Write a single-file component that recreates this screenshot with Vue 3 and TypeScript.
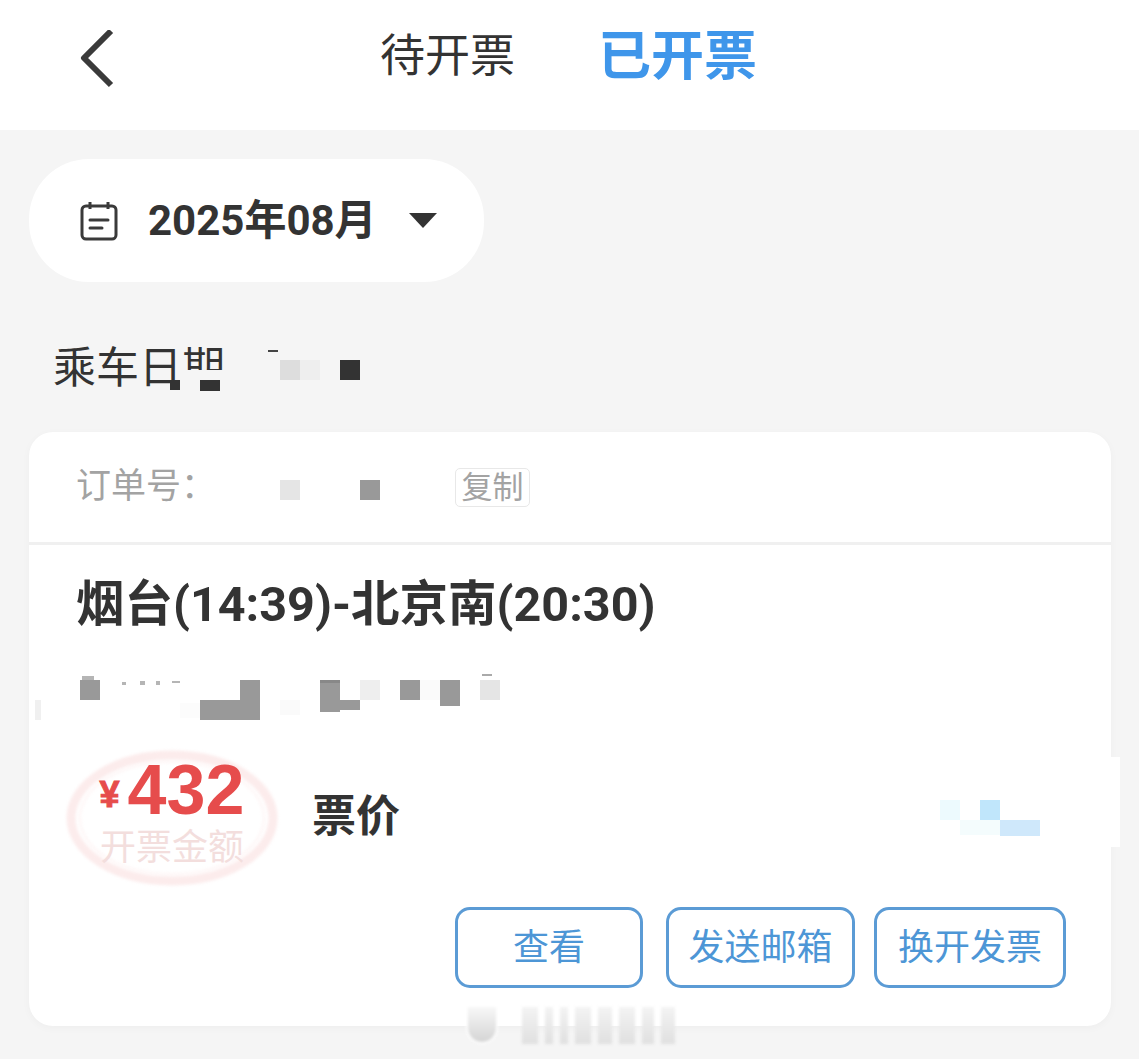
<script setup lang="ts">
interface Block { x: number; y: number; w: number; h: number; c: string }

// pixelated blocks that sit over the private parts of the order
const blocks: Block[] = [
  { x: 178, y: 370, w: 46, h: 22, c: '#f5f5f5' },
  { x: 170, y: 380, w: 10, h: 10, c: '#333333' },
  { x: 200, y: 380, w: 20, h: 11, c: '#333333' },
  { x: 268, y: 350, w: 10, h: 2, c: '#444444' },
  { x: 280, y: 360, w: 20, h: 20, c: '#dddddd' },
  { x: 300, y: 360, w: 20, h: 20, c: '#eeeeee' },
  { x: 340, y: 360, w: 20, h: 20, c: '#333333' },
  { x: 280, y: 480, w: 20, h: 20, c: '#e5e5e5' },
  { x: 360, y: 480, w: 20, h: 20, c: '#999999' },
  { x: 80, y: 680, w: 20, h: 20, c: '#999999' },
  { x: 82, y: 676, w: 12, h: 4, c: '#b5b5b5' },
  { x: 122, y: 682, w: 4, h: 3, c: '#b5b5b5' },
  { x: 140, y: 681, w: 5, h: 4, c: '#b5b5b5' },
  { x: 156, y: 681, w: 4, h: 4, c: '#b5b5b5' },
  { x: 172, y: 681, w: 8, h: 2, c: '#b5b5b5' },
  { x: 180, y: 703, w: 20, h: 15, c: '#fcfcfc' },
  { x: 240, y: 680, w: 20, h: 20, c: '#999999' },
  { x: 200, y: 700, w: 60, h: 20, c: '#999999' },
  { x: 280, y: 700, w: 20, h: 15, c: '#fafafa' },
  { x: 320, y: 680, w: 20, h: 32, c: '#999999' },
  { x: 320, y: 680, w: 20, h: 3, c: '#888888' },
  { x: 340, y: 700, w: 20, h: 10, c: '#999999' },
  { x: 360, y: 680, w: 20, h: 20, c: '#eeeeee' },
  { x: 400, y: 680, w: 20, h: 20, c: '#999999' },
  { x: 420, y: 680, w: 20, h: 20, c: '#fafafa' },
  { x: 440, y: 680, w: 20, h: 26, c: '#999999' },
  { x: 480, y: 680, w: 20, h: 20, c: '#e5e5e5' },
  { x: 482, y: 674, w: 10, h: 2, c: '#aaaaaa' },
  { x: 35, y: 700, w: 6, h: 20, c: '#f0f0f0' },
  { x: 940, y: 800, w: 20, h: 20, c: '#edfafe' },
  { x: 980, y: 800, w: 20, h: 20, c: '#c0e6fb' },
  { x: 960, y: 820, w: 40, h: 15, c: '#f4fcfd' },
  { x: 1000, y: 820, w: 40, h: 16, c: '#cfe8fb' },
  { x: 1111, y: 757, w: 9, h: 90, c: '#ffffff' }
]

const blockStyle = (b: Block) => ({
  left: b.x + 'px',
  top: b.y + 'px',
  width: b.w + 'px',
  height: b.h + 'px',
  background: b.c
})

const actions = [
  { label: '查看', width: 188 },
  { label: '发送邮箱', width: 189 },
  { label: '换开发票', width: 192 }
]

const markBars = [16, 8, 8, 16, 14, 16, 12, 14]
</script>

<template>
  <div class="page">
    <header class="top-bar">
      <svg class="back" width="34" height="58" viewBox="0 0 34 58">
        <path d="M31 1 L4 28 L31 55" fill="none" stroke="#3a3a3a" stroke-width="6" stroke-linejoin="round" />
      </svg>
      <div class="tabs">
        <span class="tab">待开票</span>
        <span class="tab active">已开票</span>
      </div>
    </header>

    <main class="content">
      <div class="month-pill">
        <svg class="cal" width="38" height="40" viewBox="0 0 38 40">
          <rect x="2" y="5" width="34" height="33" rx="4" fill="none" stroke="#3a3a3a" stroke-width="3" />
          <path d="M10 1v7M28 1v7" stroke="#3a3a3a" stroke-width="3" />
          <path d="M10 19h18M10 27h12" stroke="#3a3a3a" stroke-width="3" stroke-linecap="round" />
        </svg>
        <span class="month">2025年08月</span>
        <span class="caret"></span>
      </div>

      <div class="ride-date">乘车日期</div>

      <section class="card">
        <div class="order-row">
          <span class="order-no">订单号：</span>
          <span class="copy">复制</span>
        </div>
        <div class="card-body">
          <h2 class="route">烟台(14:39)-北京南(20:30)</h2>
          <div class="price-row">
            <div class="stamp">
              <svg class="stamp-ring" width="214" height="138" viewBox="0 0 214 138">
                <ellipse cx="107" cy="69" rx="101" ry="63" fill="none" stroke="#fcecec" stroke-width="9" />
                <ellipse cx="107" cy="69" rx="92" ry="56" fill="none" stroke="#fef5f5" stroke-width="2" />
              </svg>
              <div class="amount"><span class="yen">¥</span>432</div>
              <div class="amount-label">开票金额</div>
            </div>
            <span class="price-name">票价</span>
          </div>
          <div class="actions">
            <button v-for="a in actions" :key="a.label" class="action" :style="{ width: a.width + 'px' }">{{ a.label }}</button>
          </div>
        </div>
      </section>
    </main>

    <!-- mosaic -->
    <i v-for="(b, i) in blocks" :key="i" class="block" :style="blockStyle(b)"></i>

    <!-- faint watermark over the bottom edge -->
    <div class="mark">
      <span class="mark-head"></span>
      <span v-for="(w, i) in markBars" :key="i" class="mark-bar" :style="{ width: w + 'px' }"></span>
    </div>
  </div>
</template>

<style>
html, body {
  margin: 0;
  background: #f5f5f5;
}
</style>

<style scoped>
.page {
  position: relative;
  width: 1139px;
  height: 1059px;
  overflow: hidden;
  background: #f5f5f5;
  color: #333;
  font-family: "Roboto", "Noto Sans CJK SC", sans-serif;
}

.top-bar {
  display: flex;
  align-items: center;
  height: 130px;
  padding: 0 0 16px 80px;
  box-sizing: border-box;
  background: #fff;
}

.tabs {
  display: flex;
  align-items: center;
  gap: 85px;
  margin-left: 266px;
}

.tab {
  font-size: 45px;
  line-height: 60px;
}

.tab.active {
  margin-left: -2px;
  font-size: 53px;
  font-weight: 700;
  color: #3f96ea;
}

.content {
  padding: 29px 28px 0 29px;
}

.month-pill {
  display: flex;
  align-items: center;
  width: 455px;
  height: 123px;
  padding-left: 51px;
  box-sizing: border-box;
  border-radius: 60px;
  background: #fff;
}

.month {
  margin: -8px 0 0 30px;
  font-size: 42px;
  font-weight: 700;
  white-space: nowrap;
}

.caret {
  width: 0;
  height: 0;
  margin-left: 32px;
  border-left: 14px solid transparent;
  border-right: 14px solid transparent;
  border-top: 15px solid #333;
}

.ride-date {
  margin: 56px 0 0 24px;
  font-size: 43px;
  line-height: 60px;
  height: 94px;
}

.card {
  height: 594px;
  border-radius: 24px;
  background: #fff;
  box-shadow: 0 2px 8px rgba(0, 0, 0, 0.03);
}

.order-row {
  display: flex;
  align-items: center;
  height: 113px;
  padding-left: 47px;
  border-bottom: 3px solid #f0f0f0;
  box-sizing: border-box;
}

.order-no {
  width: 379px;
  margin-top: -10px;
  font-size: 35px;
  color: #a3a3a3;
}

.copy {
  width: 75px;
  height: 39px;
  border: 1px solid #e8e8e8;
  border-radius: 5px;
  box-sizing: border-box;
  font-size: 31px;
  line-height: 37px;
  text-align: center;
  color: #a3a3a3;
}

.card-body {
  padding: 0 45px 0 47px;
}

.route {
  margin: 0;
  padding-top: 27px;
  font-size: 48.5px;
  line-height: 66px;
  font-weight: 700;
  white-space: nowrap;
}

.price-row {
  display: flex;
  align-items: center;
  margin-top: 111px;
  margin-left: -11px;
  height: 138px;
}

.stamp {
  position: relative;
  width: 214px;
  height: 138px;
  flex: none;
  text-align: center;
}

.stamp-ring {
  position: absolute;
  left: 0;
  top: 0;
  filter: blur(1.5px);
}

.amount {
  position: relative;
  padding-top: 10px;
  font-family: "Liberation Sans", sans-serif;
  font-size: 70px;
  line-height: 62px;
  font-weight: 700;
  color: #e64c4c;
  white-space: nowrap;
}

.yen {
  margin-right: 8px;
  font-size: 36px;
  vertical-align: 7px;
  -webkit-text-stroke: 1px #e64c4c;
}

.amount-label {
  position: relative;
  font-size: 36px;
  line-height: 44px;
  color: #f3dedd;
  white-space: nowrap;
}

.price-name {
  margin: -10px 0 0 33px;
  font-size: 44px;
  font-weight: 700;
}

.actions {
  display: flex;
  justify-content: flex-end;
  gap: 19px;
  margin-top: 20px;
}

.action {
  height: 81px;
  padding: 0 0 8px;
  border: 3px solid #5b9bd5;
  border-radius: 15px;
  background: #fff;
  font-family: inherit;
  font-size: 36px;
  color: #4d96d6;
}

.action:first-child {
  margin-right: 4px;
}

.block {
  position: absolute;
}

.mark {
  position: absolute;
  left: 466px;
  top: 1007px;
  display: flex;
  gap: 7px;
  height: 37px;
  filter: blur(1.5px);
}

.mark-head {
  width: 32px;
  margin-right: 17px;
  border: 2px solid #fff;
  border-top: 0;
  border-radius: 0 0 16px 16px;
  box-sizing: border-box;
  background: linear-gradient(180deg, #f7f7f7, #d4d4d4);
}

.mark-bar {
  background: linear-gradient(180deg, #f3f3f3, #e0e0e0);
}

.back {
  flex: none;
  margin-bottom: -4px;
}

.cal {
  flex: none;
}
</style>
